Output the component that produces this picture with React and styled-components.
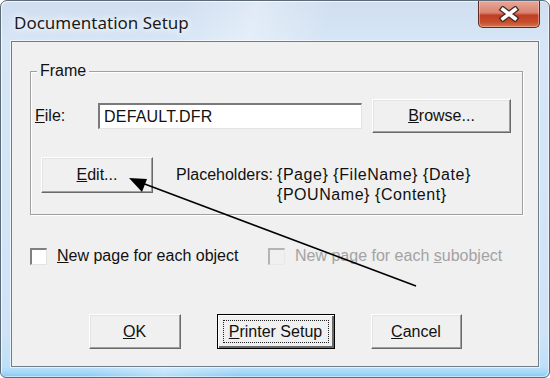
import React from 'react';
import styled, { createGlobalStyle } from 'styled-components';

const GlobalStyle = createGlobalStyle`
  html, body {
    margin: 0;
    padding: 0;
    background: #ffffff;
  }
  #root {
    width: 550px;
    height: 378px;
  }
`;

const Window = styled.div`
  position: relative;
  box-sizing: border-box;
  width: 550px;
  height: 378px;
  display: flex;
  flex-direction: column;
  border: 1px solid #5d6a78;
  border-radius: 7px 7px 6px 6px;
  overflow: hidden;
  background:
    linear-gradient(104deg, rgba(255, 255, 255, 0) 28%, rgba(255, 255, 255, 0.35) 40%, rgba(255, 255, 255, 0) 52%),
    linear-gradient(180deg, #d0def0 0px, #d6e6f6 40px, #d0e3f6 330px, #bde0f8 366px, #a2d6f7 372px, #7cc5f0 377px);
  box-shadow: inset 1px 1px 0 rgba(255, 255, 255, 0.7), inset -1px -1px 0 rgba(255, 255, 255, 0.5);
  font-family: 'Liberation Sans', Arial, sans-serif;
  font-size: 16px;
  color: #111;
`;

const TitleBar = styled.div`
  height: 40px;
  display: flex;
  align-items: flex-start;
  padding-left: 13px;
`;

const TitleText = styled.div`
  padding-top: 11px;
  font-family: 'Noto Sans', 'Open Sans', sans-serif;
  font-size: 17px;
  line-height: 22px;
  color: #1b1b1b;
  text-shadow: 0 0 6px #fff, 0 0 10px #fff;
`;

const CloseButton = styled.div`
  margin-left: auto;
  margin-right: 9px;
  width: 62px;
  height: 27px;
  box-sizing: border-box;
  border: 1px solid #5e2a22;
  border-top: none;
  border-radius: 0 0 5px 5px;
  display: flex;
  align-items: center;
  justify-content: center;
  background: linear-gradient(180deg, #e7a899 0%, #d9836f 45%, #c13d24 55%, #c44c2b 80%, #d8744a 100%);
  box-shadow: inset 0 0 0 1px rgba(255, 215, 200, 0.45);
`;

const Client = styled.div`
  flex: 1;
  margin: 0 10px 10px;
  display: flex;
  flex-direction: column;
  border: 1px solid #6f7d8b;
  background: #f0f0f0;
  box-shadow: 0 0 0 1px rgba(255, 255, 255, 0.6);
`;

const GroupBox = styled.div`
  position: relative;
  box-sizing: border-box;
  height: 144px;
  margin: 29px 15px 0 18px;
  padding: 27px 0 0 4px;
  border: 1px solid #a0a0a0;
  box-shadow: inset 1px 1px 0 #fff, 1px 1px 0 #fff;
`;

const Legend = styled.span`
  position: absolute;
  top: -10px;
  left: 6px;
  padding: 0 3px;
  line-height: 18px;
  background: #f0f0f0;
`;

const FileRow = styled.div`
  display: flex;
  align-items: center;
  height: 34px;
`;

const FieldLabel = styled.span`
  width: ${(p) => p.$width}px;
  margin-left: ${(p) => p.$offset || 0}px;
  margin-top: ${(p) => p.$top || 0}px;
  line-height: 20px;
  flex-shrink: 0;
`;

const TextField = styled.div`
  box-sizing: border-box;
  width: 264px;
  height: 26px;
  padding: 2px 0 0 4px;
  background: #fff;
  border-style: solid;
  border-width: 2px 1px 1px 2px;
  border-color: #7a7a7a #e3e3e3 #e3e3e3 #7a7a7a;
  font-size: 16px;
  line-height: 20px;
  letter-spacing: 0.2px;
`;

const Button = styled.div`
  box-sizing: border-box;
  width: ${(p) => p.$width}px;
  height: ${(p) => p.$height || 35}px;
  margin-left: ${(p) => p.$offset || 0}px;
  display: flex;
  align-items: center;
  justify-content: center;
  flex-shrink: 0;
  background: #f0f0f0;
  border: 1px solid;
  border-color: ${(p) => (p.$default ? '#000' : '#fff #696969 #696969 #fff')};
  box-shadow: ${(p) =>
    p.$default
      ? 'inset 1px 1px 0 #fff, inset -2px -2px 0 #696969, inset -1px -1px 0 #a0a0a0'
      : 'inset -1px -1px 0 #a0a0a0, inset 1px 1px 0 #e3e3e3'};
  line-height: 20px;
`;

const FocusRect = styled.span`
  box-sizing: border-box;
  display: flex;
  align-items: center;
  justify-content: center;
  width: calc(100% - 10px);
  height: calc(100% - 10px);
  border: 1px dotted #222;
`;

const EditRow = styled.div`
  display: flex;
  align-items: flex-start;
  margin-top: 24px;
`;

const Placeholders = styled.div`
  margin-top: 8px;
  line-height: 20px;
  letter-spacing: 0.55px;
`;

const CheckRow = styled.div`
  display: grid;
  grid-template-columns: 238px auto;
  align-items: center;
  margin: 32px 0 0 18px;
  height: 18px;
`;

const CheckItem = styled.div`
  display: flex;
  align-items: center;
  gap: 10px;
  color: ${(p) => (p.$disabled ? '#a3a3a3' : '#111')};
`;

const Box = styled.span`
  box-sizing: border-box;
  width: 17px;
  height: 17px;
  background: ${(p) => (p.$disabled ? '#f0f0f0' : '#fff')};
  border-style: solid;
  border-width: 2px 1px 1px 2px;
  border-color: ${(p) =>
    p.$disabled ? '#b4b4b4 #e8e8e8 #e8e8e8 #b4b4b4' : '#808080 #e3e3e3 #e3e3e3 #808080'};
`;

const ButtonRow = styled.div`
  display: flex;
  justify-content: center;
  gap: 36px;
  margin-top: 49px;
`;

const Overlay = styled.svg`
  position: absolute;
  left: -1px;
  top: -1px;
  width: 550px;
  height: 378px;
  pointer-events: none;
`;

export default function App() {
  return (
    <>
      <GlobalStyle />
      <Window>
        <TitleBar>
          <TitleText>Documentation Setup</TitleText>
          <CloseButton>
            <svg width="24" height="16" viewBox="0 0 24 16">
              <path d="M6 3.5 L18 12.5 M18 3.5 L6 12.5" stroke="#4a2a24" strokeWidth="6.2" strokeLinecap="square" />
              <path d="M6 3.5 L18 12.5 M18 3.5 L6 12.5" stroke="#fff" strokeWidth="3.6" strokeLinecap="square" />
            </svg>
          </CloseButton>
        </TitleBar>
        <Client>
          <GroupBox>
            <Legend>Frame</Legend>
            <FileRow>
              <FieldLabel $width={63}>
                <u>F</u>ile:
              </FieldLabel>
              <TextField>DEFAULT.DFR</TextField>
              <Button $width={139} $height={34} $offset={10}>
                <span>
                  <u>B</u>rowse...
                </span>
              </Button>
            </FileRow>
            <EditRow>
              <Button $width={112} $height={36} $offset={6}>
                <span>
                  <u>E</u>dit...
                </span>
              </Button>
              <FieldLabel $width={101} $offset={23} $top={8}>
                Placeholders:
              </FieldLabel>
              <Placeholders>
                {'{Page} {FileName} {Date}'}
                <br />
                {'{POUName} {Content}'}
              </Placeholders>
            </EditRow>
          </GroupBox>
          <CheckRow>
            <CheckItem>
              <Box />
              <span>
                <u>N</u>ew page for each object
              </span>
            </CheckItem>
            <CheckItem $disabled>
              <Box $disabled />
              <span>
                New page for each <u>s</u>ubobject
              </span>
            </CheckItem>
          </CheckRow>
          <ButtonRow>
            <Button $width={92}>
              <span>
                <u>O</u>K
              </span>
            </Button>
            <Button $width={118} $default>
              <FocusRect>
                <span>
                  <u>P</u>rinter Setup
                </span>
              </FocusRect>
            </Button>
            <Button $width={91}>
              <span>
                <u>C</u>ancel
              </span>
            </Button>
          </ButtonRow>
        </Client>
        <Overlay viewBox="0 0 550 378">
          <line x1="416" y1="286" x2="142" y2="183" stroke="#000" strokeWidth="1.6" />
          <polygon points="129,178 147,179 142,192" fill="#000" />
        </Overlay>
      </Window>
    </>
  );
}
